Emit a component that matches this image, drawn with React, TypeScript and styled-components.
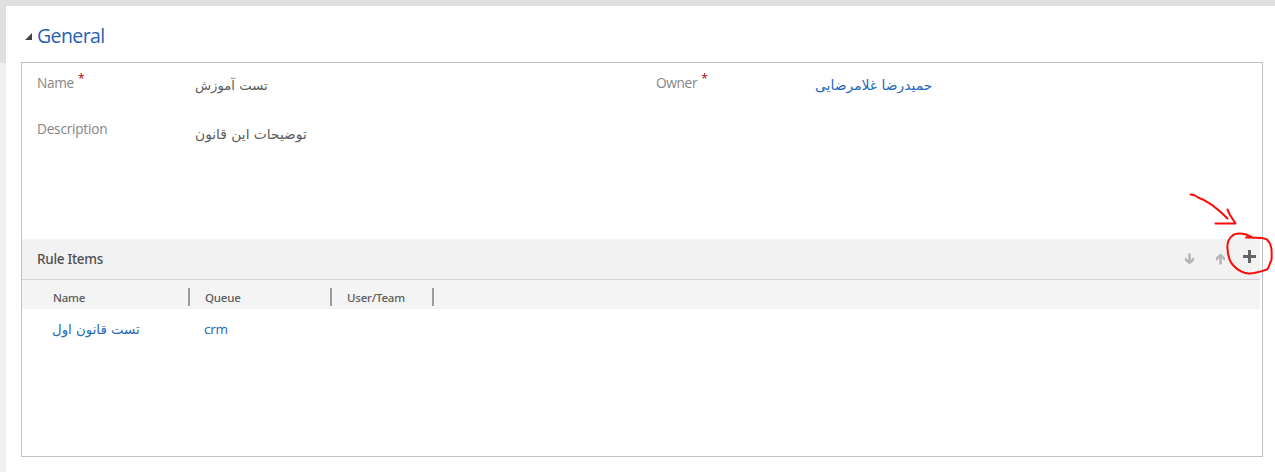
import React from 'react';
import styled, { createGlobalStyle } from 'styled-components';

const GlobalStyle = createGlobalStyle`
  * { box-sizing: border-box; }
  body { margin: 0; background: #fff; overflow: hidden; }
`;

const Page = styled.div`
  width: 1275px;
  height: 472px;
  display: grid;
  grid-template-columns: 6px 1fr;
  grid-template-rows: 6px 57px 1fr;
  font-family: 'Open Sans', 'DejaVu Sans', sans-serif;
  color: #444;
`;
const TopStrip = styled.div`
  grid-column: 1 / 3;
  background: #e0e0e0;
`;
const SideStrip = styled.div<{ $color: string }>`
  grid-column: 1;
  background: ${(p) => p.$color};
`;
const Main = styled.main`
  grid-column: 2;
  grid-row: 2 / 4;
  padding: 0 12px 0 15px;
`;
const SectionHeading = styled.header`
  height: 56px;
  padding: 4px 0 0 4px;
  display: flex;
  align-items: center;
  gap: 5px;
`;
const Title = styled.h1`
  margin: 0;
  font-size: 19.5px;
  line-height: 28px;
  font-weight: 400;
  letter-spacing: -0.6px;
  color: #1f62b9;
`;
const Panel = styled.section`
  width: 1242px;
  height: 395px;
  border: 1px solid #bdc3c7;
`;
const Fields = styled.div`
  height: 176px;
  padding: 8px 15px 0;
  display: grid;
  grid-template-columns: 158px 461px 159px 1fr;
  grid-template-rows: 46px 46px;
`;
const Label = styled.div<{ $spacing?: number }>`
  display: flex;
  align-items: flex-start;
  gap: 4px;
  font-size: 13.7px;
  line-height: 24px;
  letter-spacing: ${(p) => p.$spacing ?? -0.35}px;
  color: #858585;
`;
const Required = styled.span`
  font-size: 12px;
  line-height: 15px;
  color: #b00000;
`;
const Value = styled.div<{ $link?: boolean; $size?: number; $top?: number }>`
  padding-top: ${(p) => p.$top ?? 3}px;
  font-family: 'DejaVu Sans', sans-serif;
  font-size: ${(p) => p.$size ?? 13}px;
  line-height: 24px;
  white-space: nowrap;
  color: ${(p) => (p.$link ? '#2268b8' : '#5c5c5c')};
`;
const GridBar = styled.div`
  width: 1238px;
  height: 41px;
  padding-left: 15px;
  display: flex;
  align-items: center;
  justify-content: space-between;
  background: #f2f2f2;
  border-bottom: 1px solid #d2d2d2;
`;
const GridTitle = styled.h2`
  margin: 0;
  font-family: 'Noto Sans', sans-serif;
  font-size: 13.5px;
  font-weight: 500;
  letter-spacing: -0.3px;
  color: #505050;
`;
const Actions = styled.div`
  display: flex;
  align-items: center;
`;
const Action = styled.button<{ $width: number; $raised?: number }>`
  width: ${(p) => p.$width}px;
  height: 40px;
  padding: 0 0 ${(p) => p.$raised ?? 0}px;
  border: 0;
  background: none;
  display: flex;
  align-items: center;
  justify-content: center;
`;
const ColumnRow = styled.div`
  width: 1238px;
  height: 29px;
  padding-left: 31px;
  display: flex;
  background: #f4f4f4;
`;
const Column = styled.div<{ $width: number }>`
  width: ${(p) => p.$width}px;
  height: 18px;
  margin: 8px 15px 0 0;
  border-right: 2px solid #9b9b9b;
  font-family: 'Noto Sans', sans-serif;
  font-size: 11.5px;
  font-weight: 500;
  line-height: 19px;
  letter-spacing: -0.2px;
  color: #5c5c5c;
`;
const DataRow = styled.div`
  height: 40px;
  padding: 9px 0 0 30px;
  display: grid;
  grid-template-columns: 152px 142px 1fr;
`;
const LatinLink = styled.span`
  font-size: 13.5px;
  line-height: 23px;
  letter-spacing: -0.3px;
  color: #2268b8;
`;
const Annotation = styled.svg`
  position: absolute;
  left: 1180px;
  top: 185px;
  pointer-events: none;
`;

const Arrow = ({ up }: { up?: boolean }) => (
  <svg width="11" height="12" viewBox="0 0 11 12">
    <path
      d="M4.200 0.500H6.800V7L10 4V7.500L5.500 11.500L1 7.500V4L4.200 7Z"
      fill="#b4b4b4"
      transform={up ? 'rotate(180 5.5 6)' : undefined}
    />
  </svg>
);

export default function App() {
  return (
    <>
      <GlobalStyle />
      <Page>
        <TopStrip />
        <SideStrip $color="#e0e0e0" />
        <SideStrip $color="#f0f0f0" />
        <Main>
          <SectionHeading>
            <svg width="7" height="7" viewBox="0 0 7 7">
              <path d="M7 0V7H0Z" fill="#444" />
            </svg>
            <Title>General</Title>
          </SectionHeading>
          <Panel>
            <Fields>
              <Label>Name<Required>*</Required></Label>
              <Value $size={13.2}><bdi>تست آموزش</bdi></Value>
              <Label>Owner<Required>*</Required></Label>
              <Value $link $top={2} $size={13.9}><bdi>حمیدرضا غلامرضایی</bdi></Value>
              <Label $spacing={-0.25}>Description</Label>
              <Value $size={13.8} $top={5}><bdi>توضیحات این قانون</bdi></Value>
            </Fields>
            <GridBar>
              <GridTitle>Rule Items</GridTitle>
              <Actions>
                <Action $width={25} aria-label="Move down"><Arrow /></Action>
                <Action $width={37} aria-label="Move up"><Arrow up /></Action>
                <Action $width={21} $raised={5} aria-label="Add">
                  <svg width="13" height="13" viewBox="0 0 13 13">
                    <path d="M5 0H8V5H13V8H8V13H5V8H0V5H5Z" fill="#666" />
                  </svg>
                </Action>
              </Actions>
            </GridBar>
            <ColumnRow>
              <Column $width={137}>Name</Column>
              <Column $width={127}>Queue</Column>
              <Column $width={87}>User/Team</Column>
            </ColumnRow>
            <DataRow>
              <Value $link $top={0} $size={13.3}><bdi>تست قانون اول</bdi></Value>
              <LatinLink>crm</LatinLink>
            </DataRow>
          </Panel>
        </Main>
      </Page>
      <Annotation width="95" height="95" viewBox="1180 185 95 95" fill="none" stroke="#ff0808" strokeWidth="2" strokeLinecap="round" strokeLinejoin="round">
        <path d="M1190.500 194.500L1194 195L1198 197.500C1209 201 1218 209 1227.500 218.500M1227.500 209.500L1230 215L1235.500 223.500H1215.500" />
        <path d="M1253.500 238L1246 234.500C1240 233 1235 233 1232 236C1228 239 1227 243 1227.500 249C1228 256 1229 261 1233 265C1238 271 1245 274 1250 273.500C1257 273 1262 271 1267 269.500C1270 266 1269 264 1271.500 260C1272 251 1272 244 1267 239.500C1262 237 1256 237.500 1246 237.500" />
      </Annotation>
    </>
  );
}
